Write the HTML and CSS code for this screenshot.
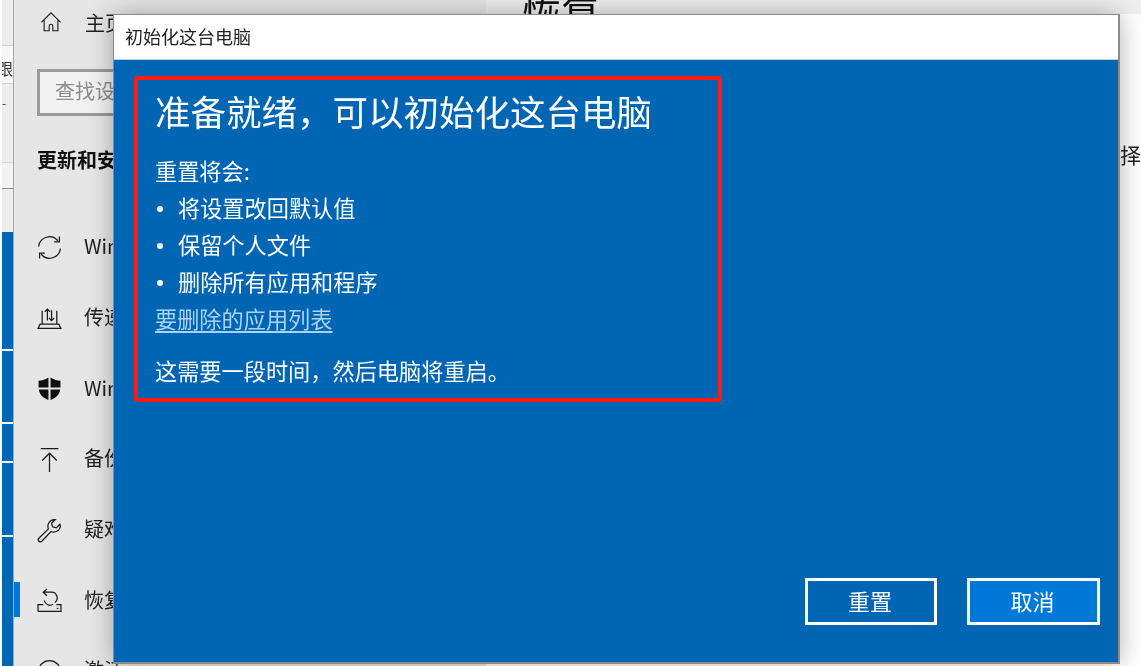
FILE: index.html
```html
<!DOCTYPE html>
<html lang="zh-CN">
<head>
<meta charset="utf-8">
<title>初始化这台电脑</title>
<link rel="stylesheet" href="styles.css">
</head>
<body>
<div class="desktop">
  <div class="back-strip">
    <div class="strip-top">
      <div class="strip-row"><span class="strip-text">跟</span></div>
      <span class="strip-dot">-</span>
      <div class="strip-band"></div>
    </div>
    <div class="strip-blue">
      <div class="seg s1"></div>
      <div class="seg s2"></div>
      <div class="seg s3"></div>
      <div class="seg s4"></div>
      <div class="seg s5"></div>
    </div>
  </div>
  <aside class="sidebar">
    <div class="home-row">
      <svg class="ico" viewBox="0 0 24 24"><path d="M1.500 12.500 12 2l10.500 10.500M4.500 10v11.500h5.500v-5a2 2 0 0 1 4 0v5h5.500V10"/></svg>
      <span class="nav-cjk">主页</span>
    </div>
    <div class="search"><span>查找设置</span></div>
    <div class="section">更新和安全</div>
    <nav class="nav">
      <div class="nav-item">
        <svg class="ico" viewBox="0 0 24 24"><path d="M1.500 11A10.500 10.500 0 0 1 20 5.500M22.500 13A10.500 10.500 0 0 1 4 18.500M21.500 1.500v5h-5M2.500 22.500v-5h5"/></svg>
        <span class="nav-lat">Windows 更新</span>
      </div>
      <div class="nav-item">
        <svg class="ico" viewBox="0 0 24 24"><path d="M5 4.500v13M19 4.500v13M1 21.500h22l-2-4H3zM10 14V3M7.500 5.500 10 3l2.500 2.500M14 4v10M11.500 11.500 14 14l2.500-2.500"/></svg>
        <span class="nav-cjk">传递优化</span>
      </div>
      <div class="nav-item">
        <svg class="ico" viewBox="0 0 24 24"><path class="solid" d="M11 1.500C8.500 3.500 5 4.500 1.500 4.500V11H11zM13 1.500c2.500 2 6 3 9.500 3V11H13zM1.700 13H11v10C6 21.500 2.500 18 1.700 13zM13 13h9.300c-.8 5-4.300 8.500-9.300 10z"/></svg>
        <span class="nav-lat">Windows 安全中心</span>
      </div>
      <div class="nav-item">
        <svg class="ico" viewBox="0 0 24 24"><path d="M3.500 1.500h17M12 24V6M5 13l7-7 7 7"/></svg>
        <span class="nav-cjk">备份</span>
      </div>
      <div class="nav-item">
        <svg class="ico" viewBox="0 0 24 24"><path d="M16.500 1.500a6.500 6.500 0 0 0-5.500 9L1.800 19.500a2 2 0 0 0 0 2.800 2 2 0 0 0 2.800 0L13.500 13a6.500 6.500 0 0 0 9-5.500l-.5-1.500-3.500 3.500-3.500-1-1-3.500 3.500-3.500z"/></svg>
        <span class="nav-cjk">疑难解答</span>
      </div>
      <div class="nav-item active">
        <svg class="ico" viewBox="0 0 24 24"><path d="M1 22.500h22v-6.500h-4.500M6 16H1v6.500M6 4h7.500a5.500 5.500 0 0 1 3.500 10M9.500 1 6 4l3.500 3.500M7 12a5.500 5.500 0 0 0 8.500 3.500M19 19.500h1.500"/></svg>
        <span class="nav-cjk">恢复</span>
      </div>
      <div class="nav-item">
        <svg class="ico" viewBox="0 0 24 24"><circle cx="12" cy="12" r="10.500"/></svg>
        <span class="nav-cjk">激活</span>
      </div>
    </nav>
  </aside>
  <main class="content">
    <div class="top-band"></div>
    <h1 class="page-title">恢复</h1>
    <p class="page-text">选择</p>
  </main>

  <section class="dialog">
    <header class="dialog-bar">初始化这台电脑</header>
    <div class="dialog-body">
      <div class="mark">
        <h2 class="headline">准备就绪，可以初始化这台电脑</h2>
        <p class="lead">重置将会:</p>
        <ul class="points">
          <li>将设置改回默认值</li>
          <li>保留个人文件</li>
          <li>删除所有应用和程序</li>
        </ul>
        <a class="list-link" href="#">要删除的应用列表</a>
        <p class="note">这需要一段时间，然后电脑将重启。</p>
      </div>
      <div class="actions">
        <button class="btn">重置</button>
        <button class="btn primary">取消</button>
      </div>
    </div>
  </section>
</div>
</body>
</html>
```

FILE: styles.css
```css
* { box-sizing: border-box; }
html, body { margin: 0; height: 100%; overflow: hidden; }
body { background: #fff; font-family: "Noto Sans CJK SC", "Noto Sans", sans-serif; }

.desktop {
  position: relative;
  display: flex;
  width: 1141px;
  height: 666px;
  overflow: hidden;
  filter: blur(0.45px);
}

/* window behind the settings app */
.back-strip {
  width: 14px;
  padding-left: 2px;
  display: flex;
  flex-direction: column;
  background: #fff;
  border-right: 1px solid #a8a8a8;
}
.strip-top {
  height: 232px;
  padding-top: 45px;
  background: #ededed;
  overflow: hidden;
  display: flex;
  flex-direction: column;
}
.strip-row {
  height: 39px;
  background: #f7f7f7;
  border-top: 1px solid #d0d0d0;
  border-bottom: 1px solid #d0d0d0;
  overflow: hidden;
  direction: rtl;
}
.strip-text { display: block; font-size: 16px; line-height: 44px; color: #333; }
.strip-dot { font-size: 12px; line-height: 14px; height: 14px; margin-top: 12px; color: #333; }
.strip-band {
  height: 27px;
  margin-top: 52px;
  background: #f2f2f2;
  border-top: 1px solid #d8d8d8;
  border-bottom: 1px solid #8c8c8c;
}
.strip-blue { flex: 1; display: flex; flex-direction: column; gap: 2px; }
.seg { background: #0065b3; }
.s1 { height: 117px; }
.s2 { height: 71px; }
.s3 { height: 37px; }
.s4 { height: 72px; }
.s5 { flex: 1; }

/* settings sidebar */
.sidebar {
  width: 472px;
  background: #e6e6e6;
  padding-left: 23px;
  color: #1f1f1f;
  flex: none;
}
.ico { width: 25px; height: 25px; flex: none; fill: none; stroke: #1a1a1a; stroke-width: 1.2; }
.ico .solid { fill: #111; stroke: none; }
.home-row { height: 44px; display: flex; align-items: center; gap: 23px; font-size: 20px; }
.home-row .ico { width: 22px; height: 22px; margin-left: 3px; }
.search {
  width: 300px;
  height: 47px;
  margin-top: 25px;
  padding-left: 15px;
  border: 3px solid #9a9a9a;
  background: #f2f2f2;
  color: #8c8c8c;
  font-size: 20px;
  line-height: 38px;
}
.section { margin-top: 29px; font-size: 20px; font-weight: 700; line-height: 30px; color: #111; }
.nav { margin-top: 37px; }
.nav-item { position: relative; height: 70.7px; display: flex; align-items: center; gap: 22px; font-size: 20px; line-height: 28px; }
.nav-item span { margin-top: -2px; }
.nav-item.active::before {
  content: "";
  position: absolute;
  left: -23px;
  top: 17px;
  width: 6px;
  height: 35px;
  background: #0078d7;
}

/* right pane */
.content { flex: 1; position: relative; background: #fff; overflow: hidden; }
.top-band { height: 14px; background: #efefef; }
.page-title {
  position: absolute;
  left: 36px;
  top: -14px;
  margin: 0;
  font-size: 39px;
  font-weight: 400;
  line-height: 50px;
  color: #111;
}
.page-text { position: absolute; right: 0; top: 139px; margin: 0; font-size: 21px; line-height: 30px; color: #222; width: 22px; overflow: hidden; direction: rtl; white-space: nowrap; }

/* modal dialog */
.dialog {
  position: absolute;
  left: 113px;
  top: 14px;
  width: 1007px;
  height: 650px;
  display: flex;
  flex-direction: column;
  border: 1px solid #8a8a8a;
  border-width: 1px 2px 2px 1px;
  box-shadow: 0 0 24px rgba(0, 0, 0, .3);
  background: #0065b3;
}
.dialog-bar {
  height: 45px;
  padding-left: 11px;
  background: #fff;
  color: #222;
  font-size: 18px;
  line-height: 43px;
  border-bottom: 1px solid #bcd6ea;
}
.dialog-body { flex: 1; position: relative; color: #fff; padding: 16px 0 0 20px; }
.mark {
  width: 588px;
  height: 326px;
  padding: 8px 0 0 17px;
  border: 4px solid #fb1a14;
  border-radius: 4px;
}
.headline { margin: 0; font-size: 35.5px; font-weight: 400; line-height: 46px; white-space: nowrap; }
.lead { margin: 18px 0 0; font-size: 22.2px; line-height: 37px; }
.points { margin: 0; padding: 0; list-style: none; font-size: 22.2px; line-height: 37px; }
.points li { position: relative; padding-left: 23px; }
.points li::before {
  content: "";
  position: absolute;
  left: 2px;
  top: 17px;
  width: 6px;
  height: 6px;
  border-radius: 50%;
  background: #fff;
}
.list-link { display: block; color: #a9d3f5; font-size: 22.2px; line-height: 37px; text-decoration: underline; text-underline-offset: 3px; }
.note { margin: 15px 0 0; font-size: 22.2px; line-height: 37px; }
.actions { position: absolute; right: 18px; bottom: 37px; display: flex; gap: 30px; }
.btn {
  width: 132px;
  height: 47px;
  padding: 0 2px 4px 0;
  border: 3px solid #fff;
  background: #0065b3;
  color: #fff;
  font: inherit;
  font-size: 22px;
  line-height: 34px;
}
.btn.primary { background: #0078d7; width: 133px; }
```
